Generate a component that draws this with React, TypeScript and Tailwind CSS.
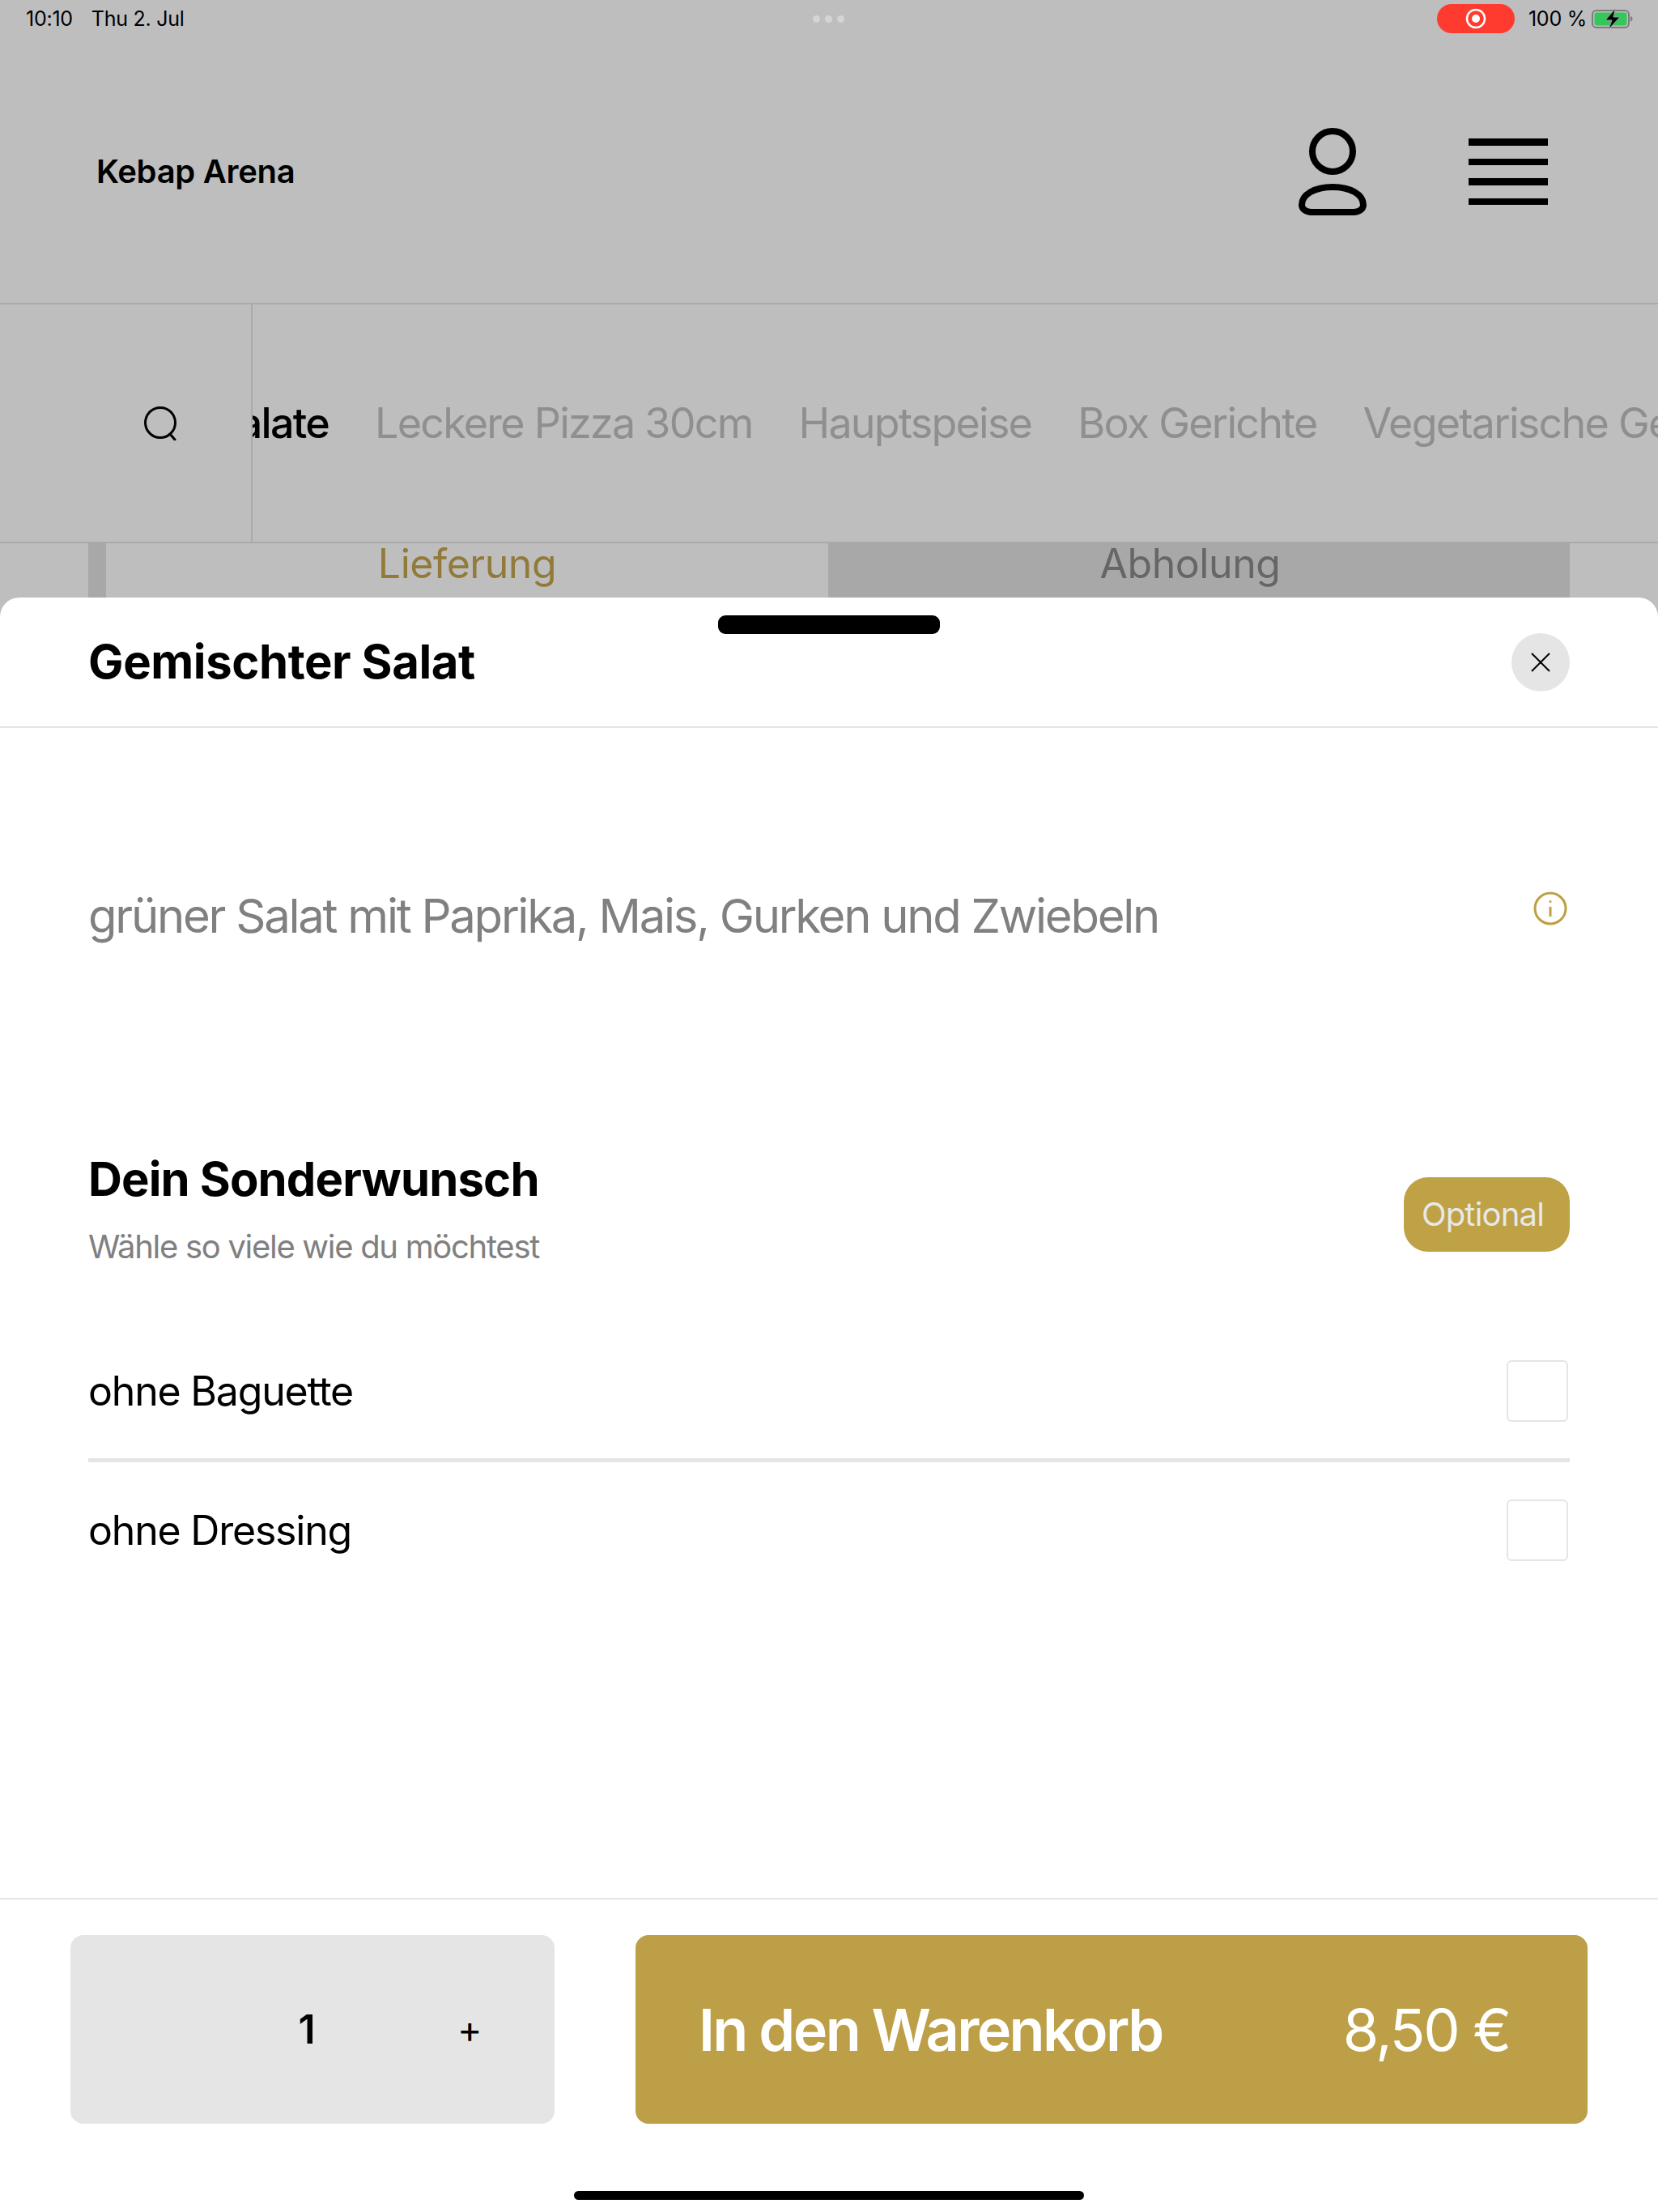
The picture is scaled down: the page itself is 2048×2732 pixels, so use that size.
const font = "font-['Inter','Noto_Sans',sans-serif]";

function StatusBar() {
  return (
    <div className="relative flex h-[46px] items-center justify-between pl-[32px] pr-[30px] text-[25px] leading-none tracking-[-0.25px] text-black">
      <div className="flex gap-[23px]">
        <span>10:10</span>
        <span>Thu 2. Jul</span>
      </div>
      <div className="absolute left-[1004px] top-[19px] flex gap-[6px]">
        <div className="h-[9px] w-[9px] rounded-full bg-[#d4d4d4]" />
        <div className="h-[9px] w-[9px] rounded-full bg-[#d4d4d4]" />
        <div className="h-[9px] w-[9px] rounded-full bg-[#d4d4d4]" />
      </div>
      <div className="flex items-center">
        <div className="mr-[17px] flex h-[36px] w-[96px] items-center justify-center rounded-[18px] bg-[#ff3b30]">
          <svg width="26" height="26" viewBox="0 0 26 26">
            <circle cx="13" cy="13" r="11" fill="none" stroke="#fff" strokeWidth="2.5" />
            <circle cx="13" cy="13" r="5" fill="#fff" />
          </svg>
        </div>
        <span className="mr-[6px]">100 %</span>
        <svg width="52" height="26" viewBox="0 0 52 26">
          <rect x="1" y="3" width="45" height="21" rx="5" fill="none" stroke="#7d7d7d" strokeWidth="2" />
          <rect x="3.5" y="5.5" width="40" height="16" rx="3" fill="#34c759" />
          <path d="M48 10c2 .5 2.5 2 2.5 3.4s-.5 2.6-2.5 3.1z" fill="#7d7d7d" />
          <path d="M29 1 17 15h8l-4 11 14-15h-8z" fill="#000" stroke="#9a9a9a" strokeWidth="1" />
        </svg>
      </div>
    </div>
  );
}

function Header() {
  return (
    <div className="flex h-[328px] items-center justify-between pt-[4px] pl-[119px] pr-[136px]">
      <span className="text-[40px] font-semibold tracking-[-0.3px] text-black">Kebap Arena</span>
      <div className="flex items-center gap-[126px]">
        <svg width="84" height="108" viewBox="0 0 84 108" fill="none" stroke="#000" strokeWidth="8">
          <circle cx="42" cy="29" r="25" />
          <path
            d="M16 104H68C75 104 80 100 80 95C80 82 64 73 42 73C20 73 4 82 4 95C4 100 9 104 16 104Z"
            strokeLinejoin="round"
          />
        </svg>
        <div className="flex w-[98px] flex-col gap-[16px]">
          <div className="h-[8.5px] bg-black" />
          <div className="h-[8.5px] bg-black" />
          <div className="h-[8.5px] bg-black" />
          <div className="h-[8.5px] bg-black" />
        </div>
      </div>
    </div>
  );
}

function CategoryNav() {
  const rest = ["Leckere Pizza 30cm", "Hauptspeise", "Box Gerichte", "Vegetarische Gerichte"];
  return (
    <div className="flex h-[297px] border-y-2 border-[#aaaaaa]">
      <div className="flex w-[312px] shrink-0 items-center border-r-2 border-[#aaaaaa] pl-[178px]">
        <svg width="42" height="42" viewBox="0 0 42 42" fill="none" stroke="#000" strokeWidth="3">
          <circle cx="20" cy="20" r="18.5" />
          <path d="M32 34l6 7" strokeLinecap="round" />
        </svg>
      </div>
      <div className="flex flex-1 items-center gap-[57px] overflow-hidden whitespace-nowrap text-[52px] tracking-[-1.75px]">
        <span className="ml-[-49px] font-medium text-black">Salate</span>
        {rest.map((name) => (
          <span key={name} className="text-[#8f8f8f]">
            {name}
          </span>
        ))}
      </div>
    </div>
  );
}

function OrderTabs() {
  return (
    <div className="flex h-[67px] px-[109px] text-[50px] leading-[50px] tracking-[-0.45px]">
      <div className="w-[22px] bg-[#a8a8a8]" />
      <div className="w-[892px] text-center text-[#917a3a]">Lieferung</div>
      <div className="flex-1 bg-[#a8a8a8] pr-[22px] text-center text-[#666666]">Abholung</div>
    </div>
  );
}

function OptionRow({ label, className }: { label: string; className?: string }) {
  return (
    <div className={`flex items-center justify-between ${className ?? ""}`}>
      <span className="text-[50px] tracking-[-1.2px] text-black">{label}</span>
      <div className="mr-[2px] h-[76px] w-[76px] rounded-[6px] border-2 border-[#e5e5e5] bg-white" />
    </div>
  );
}

function Sheet() {
  return (
    <div className="relative flex flex-1 flex-col rounded-t-[24px] bg-white">
      <div className="absolute left-[887px] top-[22px] h-[23px] w-[274px] rounded-[9px] bg-black" />
      <div className="flex h-[161px] items-center justify-between border-b-2 border-[#e5e5e5] px-[109px]">
        <span className="text-[58px] font-bold tracking-[-0.4px] text-black">Gemischter Salat</span>
        <button className="flex h-[72px] w-[72px] items-center justify-center rounded-full bg-[#e5e5e5]">
          <svg width="24" height="24" viewBox="0 0 24 24" fill="none" stroke="#000" strokeWidth="2">
            <path d="M1 1l22 22M23 1 1 23" />
          </svg>
        </button>
      </div>

      <div className="flex h-[470px] items-center justify-between pl-[109px] pr-[112px] pb-[6px]">
        <span className="text-[58px] tracking-[-2.25px] text-[#808080]">
          grüner Salat mit Paprika, Mais, Gurken und Zwiebeln
        </span>
        <svg className="mb-[18px]" width="42" height="42" viewBox="0 0 42 42" fill="none" stroke="#bda045" strokeWidth="3">
          <circle cx="21" cy="21" r="19" />
          <path d="M21 19v12" />
          <circle cx="21" cy="12.5" r="1.5" fill="#bda045" stroke="none" />
        </svg>
      </div>

      <div className="mt-[52px] flex items-center justify-between px-[109px]">
        <div>
          <h2 className="text-[58px] font-bold leading-[70px] tracking-[-0.85px] text-black">Dein Sonderwunsch</h2>
          <p className="mt-[24px] text-[40px] leading-[50px] tracking-[-1.3px] text-[#808080]">
            Wähle so viele wie du möchtest
          </p>
        </div>
        <div className="mt-[14px] flex h-[92px] w-[205px] items-center justify-center rounded-[30px] bg-[#bfa146] pr-[10px] text-[40px] tracking-[-0.8px] text-[#e8e8e8]">
          Optional
        </div>
      </div>

      <div className="mt-[115px] px-[109px]">
        <OptionRow label="ohne Baguette" className="h-[76px]" />
        <div className="mt-[45px] h-[5px] bg-[#e5e5e5]" />
        <OptionRow label="ohne Dressing" className="mt-[46px] h-[76px]" />
      </div>

      <div className="mt-auto border-t-2 border-[#e5e5e5] pt-[44px] pb-[15px] pl-[87px] pr-[87px]">
        <div className="flex h-[233px] gap-[100px]">
          <div className="relative flex w-[598px] items-center justify-center rounded-[16px] bg-[#e5e5e5]">
            <span className="mr-[14px] text-[50px] font-semibold text-black">1</span>
            <span className="absolute left-[478px] text-[46px] text-black">+</span>
          </div>
          <div className="flex flex-1 items-center justify-between rounded-[16px] bg-[#bc9f47] pl-[78px] pr-[96px] text-white">
            <span className="text-[72px] font-semibold tracking-[-2.6px]">In den Warenkorb</span>
            <span className="text-[72px] tracking-[-2.3px]">8,50 €</span>
          </div>
        </div>
        <div className="mx-auto mt-[83px] h-[11px] w-[630px] rounded-full bg-black" />
      </div>
    </div>
  );
}

export default function App() {
  return (
    <div className={`flex h-[2732px] w-[2048px] flex-col overflow-hidden bg-[#bebebe] ${font}`}>
      <StatusBar />
      <Header />
      <CategoryNav />
      <OrderTabs />
      <Sheet />
    </div>
  );
}
